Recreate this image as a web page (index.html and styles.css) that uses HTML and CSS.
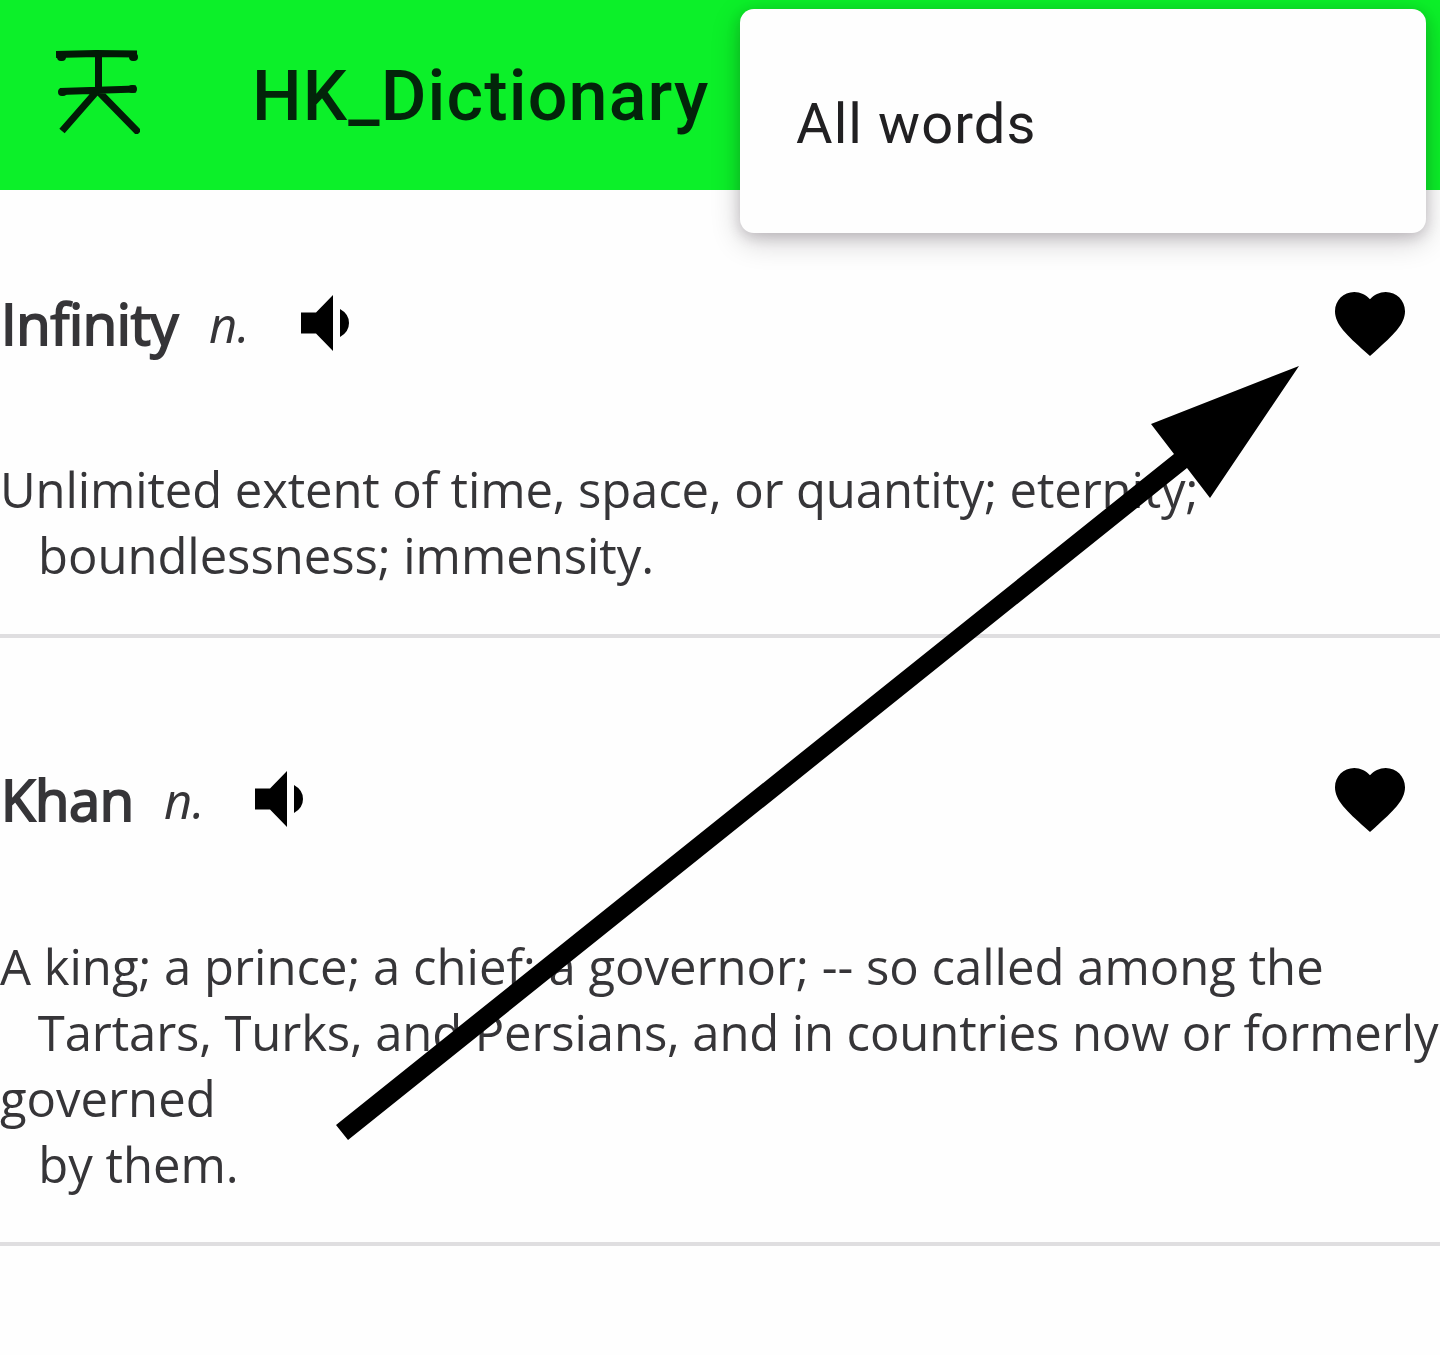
FILE: index.html
```html
<!DOCTYPE html>
<html lang="en">
<head>
<meta charset="utf-8">
<title>HK_Dictionary</title>
<link rel="stylesheet" href="styles.css">
</head>
<body>
<header class="app-bar">
  <svg class="logo" viewBox="0 0 84 84" aria-hidden="true"><path d="M0 4.500L40 3.500L81 4M42.500 4V40M4 41.500L80 39M41 41L6 81M42 41L83 83"/><path class="tips" d="M5 7H6M77 7H78M6 42H7M76 39H77"/></svg>
  <h1 class="title">HK_Dictionary</h1>
</header>
<nav class="menu"><span class="menu-item">All words</span></nav>
<main class="entries">
  <article class="entry">
    <div class="head">
      <h2 class="word">Infinity</h2><span class="pos">n.</span>
      <svg class="speaker" viewBox="0 0 48 56"><path d="M0 17.500H15L32 0V56L15 38.500H0ZM39 14Q48 19 48 28T39 42Z"/></svg>
      <svg class="heart" viewBox="2 3 20 18.35" preserveAspectRatio="none"><path d="M12 21.35l-1.45-1.32C5.4 15.36 2 12.28 2 8.5 2 5.42 4.42 3 7.5 3c1.74 0 3.41.81 4.5 2.09C13.09 3.81 14.76 3 16.5 3 19.58 3 22 5.42 22 8.5c0 3.78-3.4 6.86-8.55 11.54L12 21.35z"/></svg>
    </div>
    <p class="definition"><span class="line tight">Unlimited extent of time, space, or quantity; eternity;</span><span class="line snug">   boundlessness; immensity.</span></p>
  </article>
  <article class="entry">
    <div class="head">
      <h2 class="word">Khan</h2><span class="pos">n.</span>
      <svg class="speaker" viewBox="0 0 48 56"><path d="M0 17.500H15L32 0V56L15 38.500H0ZM39 14Q48 19 48 28T39 42Z"/></svg>
      <svg class="heart" viewBox="2 3 20 18.35" preserveAspectRatio="none"><path d="M12 21.35l-1.45-1.32C5.4 15.36 2 12.28 2 8.5 2 5.42 4.42 3 7.5 3c1.74 0 3.41.81 4.5 2.09C13.09 3.81 14.76 3 16.5 3 19.58 3 22 5.42 22 8.5c0 3.78-3.4 6.86-8.55 11.54L12 21.35z"/></svg>
    </div>
    <p class="definition"><span class="line">A king; a prince; a chief; a governor; -- so called among the</span><span class="line tight">   Tartars, Turks, and Persians, and in countries now or formerly</span><span class="line">governed</span><span class="line">   by them.</span></p>
  </article>
</main>
<svg class="arrow" viewBox="0 0 1440 1355" aria-hidden="true"><path d="M336 1125L1174 454L1151 424L1299 366L1210 498L1187 468L348 1140Z"/></svg>
</body>
</html>
```
FILE: styles.css
```css
* { box-sizing: border-box; }
body { margin: 0; position: relative; height: 1355px; overflow: hidden; background: #fefefe; color: #363538; font-family: "Open Sans", sans-serif; }
.app-bar { height: 190px; background: #0cf029; display: flex; align-items: center; padding-left: 56px; }
.logo { width: 84px; height: 84px; margin-top: -6px; fill: none; stroke: #021a06; stroke-width: 7; }
.logo .tips { stroke-width: 8; stroke-linecap: round; }
.title { margin: 1px 0 0 112px; font: 500 70px/82px Roboto, sans-serif; letter-spacing: 1.15px; color: #03240a; }
.menu { position: absolute; left: 740px; top: 9px; width: 686px; height: 224px; border-radius: 14px; background: #fefefe; display: flex; align-items: center; padding: 6px 56px 0; box-shadow: 0 8px 30px rgba(20,0,20,.2), 0 4px 14px rgba(20,0,20,.16); font: 56px/66px Roboto, sans-serif; letter-spacing: 1.1px; color: #212022; }
.entry { border-bottom: 4px solid #dfdee0; }
.entry:first-child { height: 448px; }
.entry:last-child { height: 608px; }
.head { display: flex; align-items: center; height: 266px; padding-right: 35px; }
.entry:last-child .head { height: 294px; padding-top: 28px; }
.word { margin: 0 0 1px 1px; font-size: 56px; line-height: 76px; font-weight: 400; letter-spacing: -.3px; -webkit-text-stroke: 2px #363538; }
.pos { font-size: 49px; font-style: italic; margin: 2px 0 0 31px; }
.speaker { width: 48px; height: 56px; margin-left: 51px; }
.entry:last-child .pos { margin-left: 30px; }
.heart { width: 70px; height: 64px; margin: 1px 0 0 auto; }
.definition { margin: 0; font-size: 49px; line-height: 66px; }
.entry:last-child .definition { margin-top: 1px; }
.line { display: block; white-space: pre; }
.tight { letter-spacing: -.12px; }
.snug { letter-spacing: -.05px; }
.arrow { position: absolute; left: 0; top: 0; width: 1440px; height: 1355px; pointer-events: none; }
```
